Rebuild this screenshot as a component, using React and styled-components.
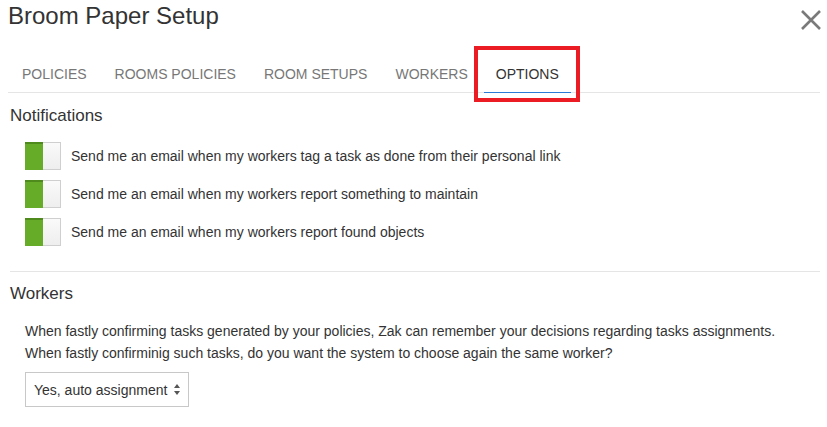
import React from "react";
import styled, { createGlobalStyle } from "styled-components";

const GlobalStyle = createGlobalStyle`
  html, body {
    margin: 0;
    padding: 0;
    background: #fff;
  }
  body {
    font-family: "Liberation Sans", Arial, sans-serif;
    color: #333;
  }
`;

const Modal = styled.div`
  width: 827px;
  height: 427px;
  box-sizing: border-box;
  padding: 0 7px 0 8px;
  overflow: hidden;
`;

const Header = styled.div`
  display: flex;
  justify-content: space-between;
  align-items: flex-start;
  height: 46px;
`;

const Title = styled.h1`
  margin: 2px 0 0;
  font-size: 24px;
  font-weight: 400;
  line-height: 28px;
  color: #333;
`;

const CloseButton = styled.button`
  border: 0;
  background: none;
  padding: 0;
  margin: 9px -2px 0 0;
  width: 22px;
  height: 22px;
  cursor: pointer;
`;

const Tabs = styled.ul`
  display: flex;
  list-style: none;
  margin: 0;
  padding: 0;
  height: 46px;
  border-bottom: 1px solid #e5e5e5;
`;

const Tab = styled.li`
  position: relative;
  display: flex;
  align-items: flex-end;
  padding: 0 14px 9px;
  font-size: 14px;
  line-height: 18px;
  color: ${(p) => (p.active ? "#333" : "#777")};
  text-transform: uppercase;

  ${(p) =>
    p.active &&
    `
    &::after {
      content: "";
      position: absolute;
      left: 2px;
      right: 2px;
      bottom: -1px;
      height: 1px;
      background: #2a7ad8;
    }
    &::before {
      content: "";
      position: absolute;
      left: -8px;
      right: -7px;
      top: 0;
      bottom: -10px;
      border: 4px solid #ec1c24;
    }
  `}
`;

const Section = styled.section`
  padding: 0 0 0 2px;
`;

const SectionTitle = styled.h2`
  margin: 0;
  font-size: 17px;
  font-weight: 400;
  line-height: 20px;
  color: #333;
`;

const ToggleList = styled.div`
  display: flex;
  flex-direction: column;
  gap: 10px;
  padding: 16px 0 0 15px;
`;

const ToggleRow = styled.label`
  display: flex;
  align-items: center;
  gap: 10px;
  font-size: 14px;
  color: #333;
`;

const Toggle = styled.span`
  display: flex;
  width: 36px;
  height: 28px;
  box-sizing: border-box;
`;

const ToggleOn = styled.span`
  width: 18px;
  background: #66ac28;
  border-top: 2px solid #4e8b1c;
`;

const ToggleKnob = styled.span`
  flex: 1;
  background: linear-gradient(#fafafa, #eeeeee);
  border: 1px solid #cfcfcf;
  border-left: 0;
`;

const Divider = styled.hr`
  margin: 25px 0 12px 2px;
  border: 0;
  border-top: 1px solid #e5e5e5;
`;

const Paragraph = styled.p`
  margin: 16px 0 0 15px;
  font-size: 14px;
  line-height: 22px;
  color: #333;
`;

const SelectBox = styled.div`
  display: inline-flex;
  align-items: center;
  gap: 7px;
  margin: 8px 0 0 15px;
  height: 35px;
  box-sizing: border-box;
  padding: 0 8px 0 8px;
  border: 1px solid #c8c8c8;
  font-size: 14px;
  color: #333;
`;

const notifications = [
  "Send me an email when my workers tag a task as done from their personal link",
  "Send me an email when my workers report something to maintain",
  "Send me an email when my workers report found objects",
];

const tabs = ["Policies", "Rooms policies", "Room setups", "Workers", "Options"];

export default function App() {
  return (
    <Modal>
      <GlobalStyle />
      <Header>
        <Title>Broom Paper Setup</Title>
        <CloseButton aria-label="close">
          <svg width="22" height="22" viewBox="0 0 22 22">
            <path d="M2 2 L20 20 M20 2 L2 20" stroke="#7a7a7a" strokeWidth="2.6" />
          </svg>
        </CloseButton>
      </Header>
      <Tabs>
        {tabs.map((t) => (
          <Tab key={t} active={t === "Options"}>
            {t}
          </Tab>
        ))}
      </Tabs>
      <Section style={{ marginTop: 13 }}>
        <SectionTitle>Notifications</SectionTitle>
        <ToggleList>
          {notifications.map((n) => (
            <ToggleRow key={n}>
              <Toggle>
                <ToggleOn />
                <ToggleKnob />
              </Toggle>
              {n}
            </ToggleRow>
          ))}
        </ToggleList>
      </Section>
      <Divider />
      <Section>
        <SectionTitle>Workers</SectionTitle>
        <Paragraph>
          When fastly confirming tasks generated by your policies, Zak can remember your decisions regarding tasks
          assignments.
          <br />
          When fastly confirminig such tasks, do you want the system to choose again the same worker?
        </Paragraph>
        <SelectBox>
          Yes, auto assignment
          <svg width="6" height="11" viewBox="0 0 6 11">
            <path d="M0 4 L3 0 L6 4 Z M0 7 L3 11 L6 7 Z" fill="#555" />
          </svg>
        </SelectBox>
      </Section>
    </Modal>
  );
}
